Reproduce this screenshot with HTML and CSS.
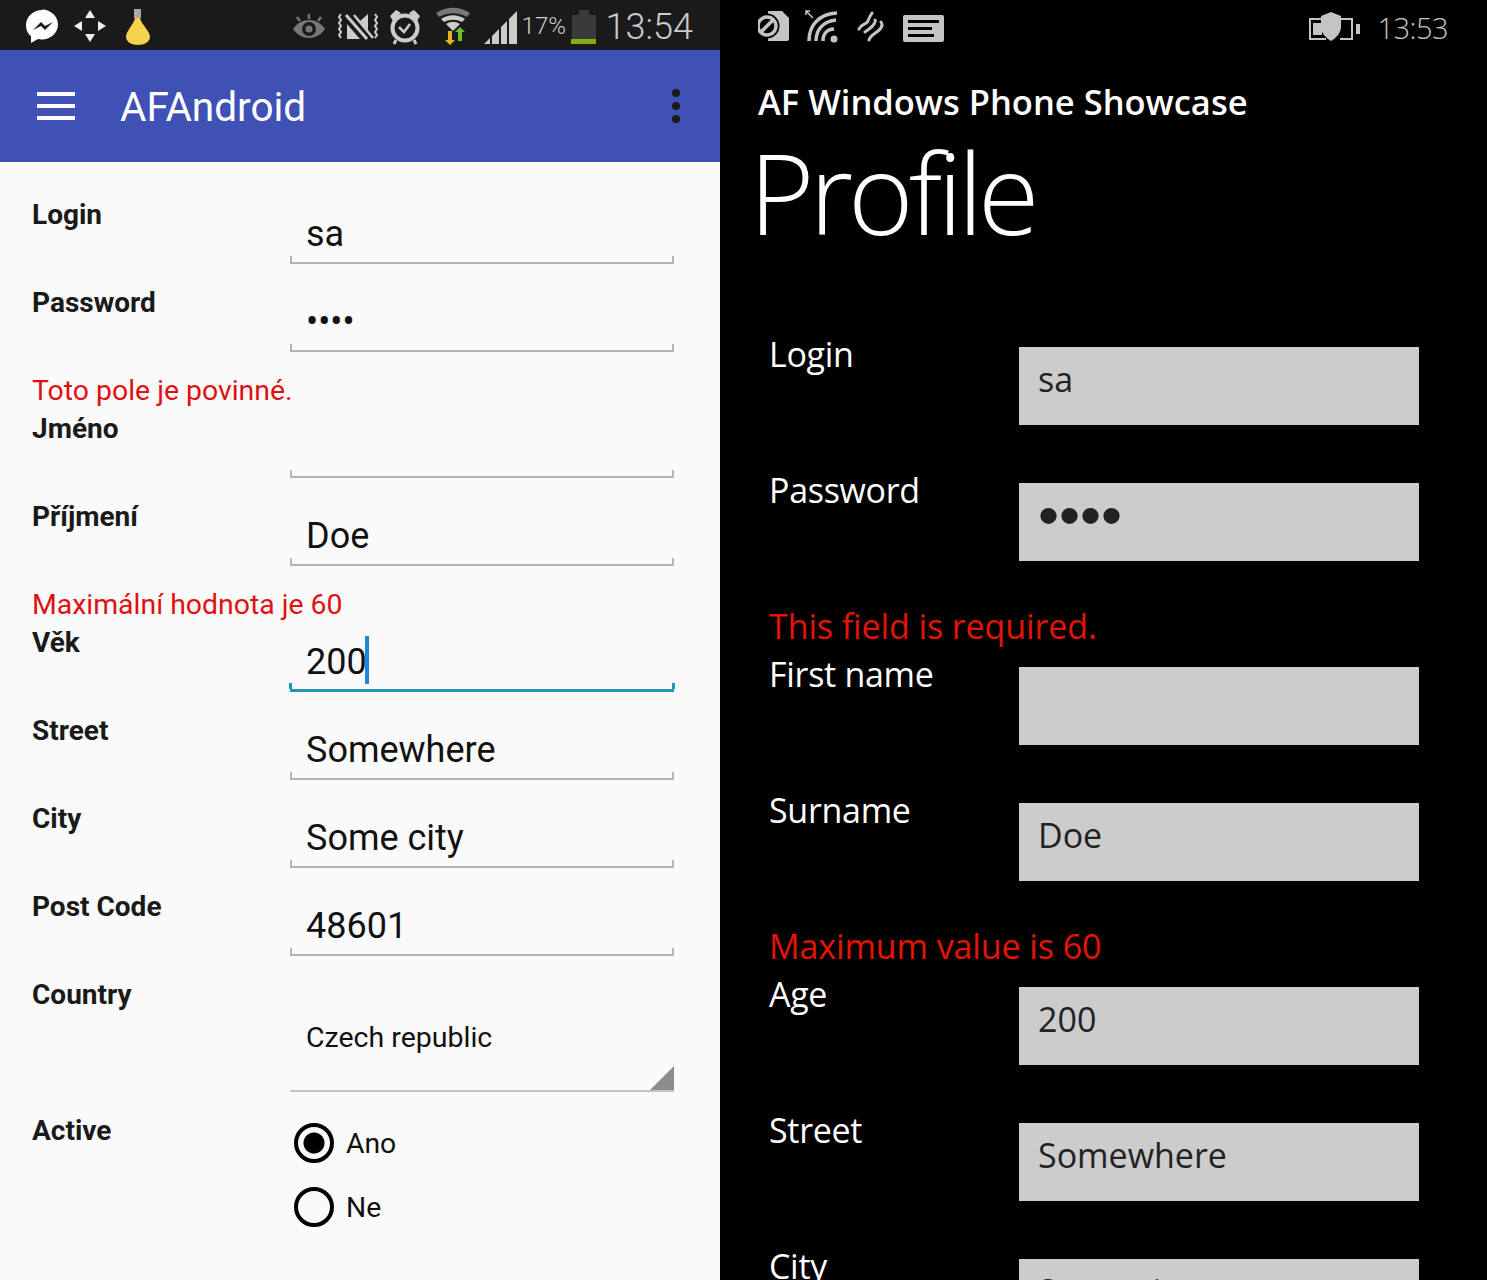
FILE: index.html
```html
<!DOCTYPE html>
<html lang="en">
<head>
    <meta charset="UTF-8">
    <meta name="viewport" content="width=device-width, initial-scale=1.0">
    <title>AF showcase</title>
    <link rel="stylesheet" href="styles.css">
</head>
<body>
    <div class="android">
        <div class="status">
            <svg class="ic" style="width:34px" viewBox="25 0 34 50"><path d="M42 10c-9 0-16 7-16 15 0 5 2 9 5 11v7l7-4c1 .3 3 .5 4 .5 9 0 16-7 16-15s-7-15-16-15z" fill="#fff"/><path d="M33 30l8-8 4 4 8-4-8 8-4-4z" fill="#1a1a1a"/></svg>
            <svg class="ic ic-arrows" viewBox="73 0 34 50"><path d="M90 10l5 8h-10zM90 42l-5-8h10zM74 26l8-5v10zM106 26l-8-5v10z" fill="#eee"/></svg>
            <svg class="ic ic-bulb" viewBox="123 0 30 50"><rect x="134" y="9" width="7" height="9" fill="#aaa"/><path d="M135 18h5c1 6 10 13 10 19 0 5-6 8-12 8s-12-3-12-8c0-6 8-13 9-19z" fill="#f6d24f"/></svg>
            <div class="status-right">
                <svg class="ic" style="width:34px" viewBox="291 0 34 50"><path d="M292 29c4-6 10-9 16-9s12 3 16 9c-4 6-10 9-16 9s-12-3-16-9z" fill="#777"/><circle cx="308" cy="29" r="7" fill="#1a1a1a"/><circle cx="308" cy="29" r="3.5" fill="#777"/><path d="M308 14v5M296 17l3 4M320 17l-3 4" stroke="#777" stroke-width="2.5"/></svg>
                <svg class="ic ic-nfc" viewBox="336 0 42 50"><path d="M340 14l-2 3 2 3-2 3 2 3-2 3 2 3-2 3 2 3M374 14l2 3-2 3 2 3-2 3 2 3-2 3 2 3-2 3" stroke="#ccc" stroke-width="2" fill="none"/><path d="M345 15l21 24" stroke="#ccc" stroke-width="3"/><path d="M346 24l13 15h-13zM367 14v16l-9-8z" fill="#ccc"/><path d="M353 15l19 23" stroke="#ccc" stroke-width="2.5"/></svg>
                <svg class="ic ic-alarm" viewBox="388 0 32 50"><circle cx="404" cy="28" r="12.5" stroke="#ccc" stroke-width="4" fill="none"/><path d="M398 27l5 5 6-8" stroke="#ccc" stroke-width="2.5" fill="none"/><path d="M389 16l6-6 5 3-8 8zM419 16l-6-6-5 3 8 8z" fill="#ccc"/><path d="M395 40l-2 4M413 40l2 4" stroke="#ccc" stroke-width="3"/></svg>
                <svg class="ic ic-wifi" viewBox="434 0 36 50"><path d="M435 13c11-7 23-7 34 0l-3 4c-9-5-19-5-28 0z" fill="#777"/><path d="M440 19c8-5 16-5 24 0l-3 3c-6-3-12-3-18 0z" fill="#ccc"/><path d="M445 24c5-3 9-3 14 0l-7 7z" fill="#ccc"/><path d="M447 31h4v9h3l-5 5-5-5h3z" fill="#e6b422"/><path d="M457 41v-9h-3l5-5 5 5h-3v9z" fill="#6bbf2a"/></svg>
                <svg class="ic ic-signal" viewBox="483 0 34 50"><path d="M483 44l6-6v6zM491 36l7-7v15h-7zM500 27l6-6v23h-6zM508 19l8-8v33h-8z" fill="#ccc"/></svg>
                <span class="pct">17%</span>
                <svg class="ic ic-batt" viewBox="570 0 26 50"><path d="M571 15h7v-5h10v5h7v29h-24z" fill="#3a3a3a"/><rect x="570" y="39" width="25" height="5" fill="#7fae12"/></svg>
                <span class="clock">13:54</span>
            </div>
        </div>
        <div class="appbar">
            <div class="burger"><span></span><span></span><span></span></div>
            <div class="appbar-title">AFAndroid</div>
            <div class="overflow"><span></span><span></span><span></span></div>
        </div>
        <form class="form">
            <div class="row">
                <div class="lbl">Login</div>
                <div class="field"><span class="val">sa</span></div>
            </div>
            <div class="row">
                <div class="lbl">Password</div>
                <div class="field"><span class="val">••••</span></div>
            </div>
            <div class="err">Toto pole je povinné.</div>
            <div class="row after-err">
                <div class="lbl">Jméno</div>
                <div class="field"></div>
            </div>
            <div class="row">
                <div class="lbl">Příjmení</div>
                <div class="field"><span class="val">Doe</span></div>
            </div>
            <div class="err">Maximální hodnota je 60</div>
            <div class="row after-err">
                <div class="lbl">Věk</div>
                <div class="field focus"><span class="val">200</span><i class="caret"></i></div>
            </div>
            <div class="row">
                <div class="lbl">Street</div>
                <div class="field"><span class="val">Somewhere</span></div>
            </div>
            <div class="row">
                <div class="lbl">City</div>
                <div class="field"><span class="val">Some city</span></div>
            </div>
            <div class="row">
                <div class="lbl">Post Code</div>
                <div class="field"><span class="val">48601</span></div>
            </div>
            <div class="row">
                <div class="lbl">Country</div>
                <div class="spinner">Czech republic<i class="corner"></i></div>
            </div>
            <div class="row radio-row">
                <div class="lbl">Active</div>
                <div class="radios">
                    <div class="radio on"><i></i>Ano</div>
                    <div class="radio"><i></i>Ne</div>
                </div>
            </div>
        </form>
    </div>

    <div class="wp">
        <div class="wp-status">
            <svg class="ic wp-sim" viewBox="758 0 32 56"><path d="M768 11h14l7 7v21a2 2 0 0 1-2 2h-19z" fill="#c4c4c4"/><circle cx="767" cy="26" r="12.5" fill="#000"/><circle cx="767" cy="26" r="9" stroke="#c4c4c4" stroke-width="3.5" fill="none"/><path d="M761 32l12-12" stroke="#c4c4c4" stroke-width="3.5"/></svg>
            <svg class="ic wp-wifi" viewBox="805 0 34 56"><circle cx="834" cy="39" r="3.5" fill="#c4c4c4"/><path d="M823 41c0-7 4-12 11-12M816 41c0-12 8-20 20-21M809 41c0-16 10-27 28-28" stroke="#c4c4c4" stroke-width="3.5" fill="none"/><path d="M813 18l-7-7M806 15v-4h4" stroke="#c4c4c4" stroke-width="1.5" fill="none"/></svg>
            <svg class="ic wp-waves" viewBox="857 0 28 56"><path d="M859 29c2-5 7-4 9-8 1-3 2-5 4-8M865 32c3-3 7-4 9-8 1-2 2-3 1-4M869 40c1-4 5-6 9-9 4-3 5-6 3-9" stroke="#c4c4c4" stroke-width="3" fill="none" stroke-linecap="round"/></svg>
            <svg class="ic wp-msg" viewBox="903 0 42 56"><rect x="903" y="15" width="41" height="27" rx="2" fill="#c4c4c4"/><path d="M908 20h31v3h-31zM908 27h24v3h-24zM908 34h26v3h-26z" fill="#000"/></svg>
            <div class="wp-right">
                <svg class="ic wp-batt" viewBox="1309 0 52 56"><path d="M1322 19h-12v20h16M1340 19h12v20h-12" stroke="#c4c4c4" stroke-width="2" fill="none"/><rect x="1313" y="23" width="9" height="12" fill="#c4c4c4"/><rect x="1356" y="24" width="4" height="10" fill="#c4c4c4"/><path d="M1331 12l10 4v11c0 6-5 11-10 14-5-3-10-8-10-14v-11z" fill="#c4c4c4"/></svg>
                <span class="wp-clock">13:53</span>
            </div>
        </div>
        <div class="wp-app">AF Windows Phone Showcase</div>
        <div class="wp-page">Profile</div>
        <form class="wp-form">
            <div class="wp-row"><div class="wp-lbl">Login</div><div class="wp-input">sa</div></div>
            <div class="wp-row"><div class="wp-lbl">Password</div><div class="wp-input wp-dots">••••</div></div>
            <div class="wp-err">This field is required.</div>
            <div class="wp-row after-err"><div class="wp-lbl">First name</div><div class="wp-input"></div></div>
            <div class="wp-row"><div class="wp-lbl">Surname</div><div class="wp-input">Doe</div></div>
            <div class="wp-err">Maximum value is 60</div>
            <div class="wp-row after-err"><div class="wp-lbl">Age</div><div class="wp-input">200</div></div>
            <div class="wp-row"><div class="wp-lbl">Street</div><div class="wp-input">Somewhere</div></div>
            <div class="wp-row"><div class="wp-lbl">City</div><div class="wp-input">Some city</div></div>
        </form>
    </div>
</body>
</html>
```

FILE: styles.css
```css
html, body {
    margin: 0;
    height: 1280px;
    overflow: hidden;
}
body {
    display: flex;
    background-color: #000;
}
.ic {
    display: block;
    height: 50px;
    flex: none;
}

/* android side */
.android {
    width: 720px;
    height: 1280px;
    overflow: hidden;
    background-color: #fafafa;
    font-family: 'Roboto', sans-serif;
}
.status {
    height: 50px;
    background-color: #1a1a1a;
    display: flex;
    padding-left: 25px;
}
.ic-arrows { width: 34px; margin-left: 14px; }
.ic-bulb { width: 30px; margin-left: 16px; }
.status-right {
    margin-left: auto;
    display: flex;
    align-items: center;
    padding-right: 27px;
}
.ic-nfc { width: 42px; margin-left: 11px; }
.ic-alarm { width: 32px; margin-left: 10px; }
.ic-wifi { width: 36px; margin-left: 14px; }
.ic-signal { width: 34px; margin-left: 13px; }
.ic-batt { width: 26px; margin-left: 4px; }
.pct {
    width: 45px;
    margin: 2px 0 0 4px;
    color: #ccc;
    font-size: 24px;
    font-weight: 300;
    white-space: nowrap;
}
.clock {
    margin: 3px 0 0 9px;
    color: #ccc;
    font-size: 36px;
    font-weight: 300;
}
.appbar {
    height: 112px;
    background-color: #3f51b5;
    display: flex;
    align-items: center;
    padding: 0 40px 0 37px;
    color: #fff;
}
.burger span {
    display: block;
    width: 38px;
    height: 4px;
    margin: 8px 0;
    background-color: #fff;
}
.appbar-title {
    margin: 2px 0 0 45px;
    font-size: 40.5px;
}
.overflow {
    margin-left: auto;
}
.overflow span {
    display: block;
    width: 8px;
    height: 8px;
    margin: 5px 0;
    border-radius: 50%;
    background-color: #1a1a1a;
}
.form {
    padding-left: 32px;
    padding-top: 14px;
}
.row {
    display: grid;
    grid-template-columns: 258px 384px;
    margin-top: 24px;
}
.row.after-err {
    margin-top: 10px;
}
.lbl {
    padding-top: 1px;
    font-size: 28px;
    line-height: 28px;
    font-weight: 700;
    color: #1a1a1a;
}
.field {
    position: relative;
    height: 64px;
    box-sizing: border-box;
    padding: 14px 0 0 16px;
    border-bottom: 2px solid #b5b5b5;
    font-size: 36px;
    line-height: 40px;
    color: #111;
}
.field::before, .field::after {
    content: "";
    position: absolute;
    bottom: 0;
    width: 2px;
    height: 6px;
    background-color: #b5b5b5;
}
.field::before { left: 0; }
.field::after { right: 0; }
.field.focus {
    border-bottom: 3px solid #2196b8;
}
.field.focus::before, .field.focus::after {
    width: 3px;
    height: 6px;
    background-color: #2196b8;
}
.field.focus::before { left: -1px; }
.field.focus::after { right: -1px; }
.caret {
    position: absolute;
    left: 75px;
    top: 8px;
    width: 4px;
    height: 48px;
    background-color: #1e88d8;
}
.err {
    height: 28px;
    box-sizing: border-box;
    margin-top: 24px;
    padding-top: 1px;
    font-size: 28.4px;
    line-height: 28px;
    color: #e01010;
}
.spinner {
    position: relative;
    height: 112px;
    box-sizing: border-box;
    padding: 41px 0 0 16px;
    border-bottom: 2px solid #c4c4c4;
    font-size: 28.5px;
    line-height: 34px;
    color: #111;
}
.corner {
    position: absolute;
    right: 0;
    bottom: 0;
    width: 0;
    height: 0;
    border-style: solid;
    border-width: 0 0 24px 24px;
    border-color: transparent transparent #8c8c8c transparent;
}
.radios {
    padding: 7px 0 0 4px;
}
.radio {
    display: flex;
    align-items: center;
    height: 40px;
    margin-bottom: 24px;
    font-size: 28.3px;
    color: #111;
}
.radio i {
    width: 40px;
    height: 40px;
    box-sizing: border-box;
    margin-right: 12px;
    border: 4.5px solid #000;
    border-radius: 50%;
    flex: none;
}
.radio.on i {
    background: radial-gradient(circle, #000 0 10px, transparent 11px);
}

/* windows phone side */
.wp {
    width: 767px;
    height: 1280px;
    overflow: hidden;
    background-color: #000;
    font-family: 'Open Sans', sans-serif;
    color: #fff;
}
.wp-status {
    height: 56px;
    display: flex;
    padding: 0 39px 0 38px;
}
.wp-status .ic { height: 56px; }
.wp-sim { width: 32px; }
.wp-wifi { width: 34px; margin-left: 15px; }
.wp-waves { width: 28px; margin-left: 18px; }
.wp-msg { width: 42px; margin-left: 18px; }
.wp-right {
    margin-left: auto;
    display: flex;
    align-items: center;
}
.wp-batt { width: 52px; }
.wp-clock {
    margin: -2px 0 0 16px;
    font-size: 29px;
    letter-spacing: -0.5px;
    font-weight: 300;
    color: #c4c4c4;
}
.wp-app {
    margin: 23px 0 0 38px;
    font-size: 34.5px;
    line-height: 46px;
    font-weight: 600;
}
.wp-page {
    margin: 2px 0 0 29px;
    font-size: 112px;
    line-height: 130px;
    letter-spacing: -5px;
    font-weight: 300;
}
.wp-form {
    padding: 0 0 0 49px;
    margin-top: 74px;
}
.wp-row {
    display: grid;
    grid-template-columns: 250px 400px;
    margin-top: 42px;
}
.wp-row.after-err {
    margin-top: 0;
}
.wp-lbl {
    font-size: 34px;
    line-height: 46px;
    letter-spacing: -0.3px;
}
.wp-input {
    height: 78px;
    box-sizing: border-box;
    margin-top: 16px;
    padding: 8px 0 0 19px;
    background-color: #ccc;
    color: #222;
    font-size: 34px;
    line-height: 48px;
}
.wp-dots {
    padding-top: 9px;
    font-family: 'Liberation Sans', sans-serif;
    font-size: 60px;
}
.wp-err {
    height: 48px;
    margin-top: 42px;
    font-size: 34px;
    line-height: 46px;
    letter-spacing: -0.1px;
    color: #e51400;
}
```
